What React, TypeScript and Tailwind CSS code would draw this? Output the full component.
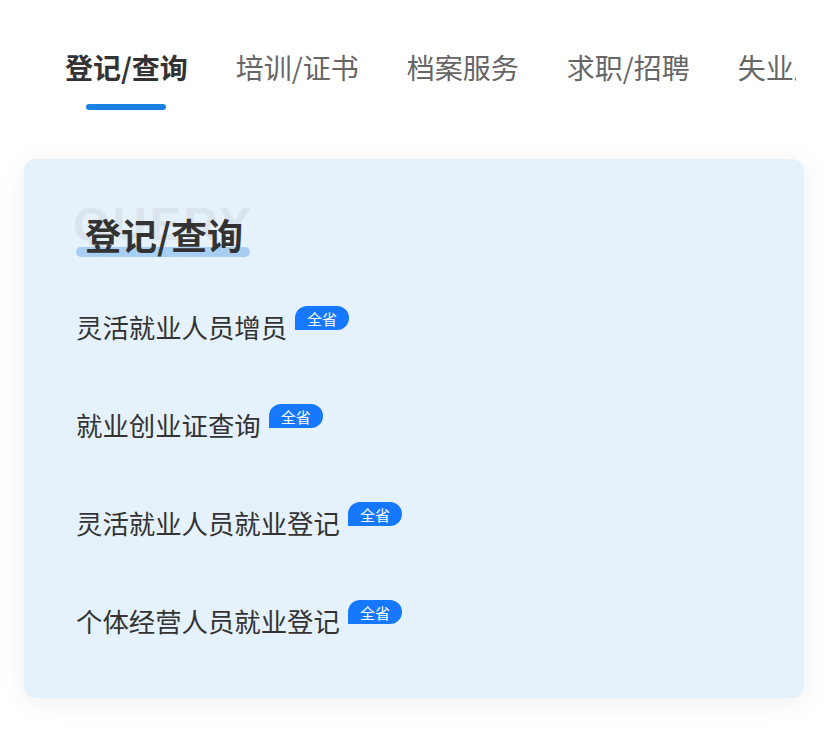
const TABS = ['登记/查询', '培训/证书', '档案服务', '求职/招聘', '失业服务']

const ITEMS = ['灵活就业人员增员', '就业创业证查询', '灵活就业人员就业登记', '个体经营人员就业登记']

const FONT = "font-['Noto_Sans_CJK_SC','Noto_Sans',sans-serif]"

export default function App() {
  const active = 0

  return (
    <div className={`min-h-[740px] w-[828px] bg-white ${FONT}`}>
      <div className="ml-[41px] w-[755px] overflow-hidden pt-[47px]">
        <div className="flex whitespace-nowrap">
          {TABS.map((tab, i) => (
            <div key={tab} className="flex shrink-0 flex-col items-center px-[24px]">
              <span
                className={`text-[28px] leading-[40px] ${
                  i === active ? 'font-bold text-[#333333]' : 'text-[#666666]'
                }`}
              >
                {tab}
              </span>
              <span
                className={`mt-[17px] h-[6px] w-[80px] rounded-full ${
                  i === active ? 'bg-[#1a82e3]' : 'bg-transparent'
                }`}
              />
            </div>
          ))}
        </div>
      </div>

      <div className="mx-[24px] mt-[49px] rounded-[12px] bg-[#e5f1fb] pb-[59px] pl-[52px] pt-[56px] shadow-[0_4px_28px_rgba(0,0,0,0.07)]">
        <div className="relative inline-block h-[40px]">
          <span className="absolute left-[-3px] top-[-15px] font-['Liberation_Sans',sans-serif] text-[47px] font-bold leading-none tracking-[3px] text-[#d9e4ed]">
            QUERY
          </span>
          <span className="absolute bottom-[-2px] left-0 h-[10px] w-[174px] rounded-full bg-[#a6cff3]" />
          <span className="relative block pl-[9px] text-[36px] font-bold leading-[38px] text-[#333333]">
            登记/查询
          </span>
        </div>

        <div className="mt-[54px] flex flex-col gap-[62px]">
          {ITEMS.map((item) => (
            <div key={item} className="flex items-start">
              <span className="text-[26.4px] leading-[36px] text-[#333333]">{item}</span>
              <span className="ml-[8px] mt-[-3px] flex h-[24px] w-[54px] items-center justify-center rounded-[12px] rounded-bl-none bg-[#1677ff] text-[15px] leading-none text-white">
                全省
              </span>
            </div>
          ))}
        </div>
      </div>
    </div>
  )
}
